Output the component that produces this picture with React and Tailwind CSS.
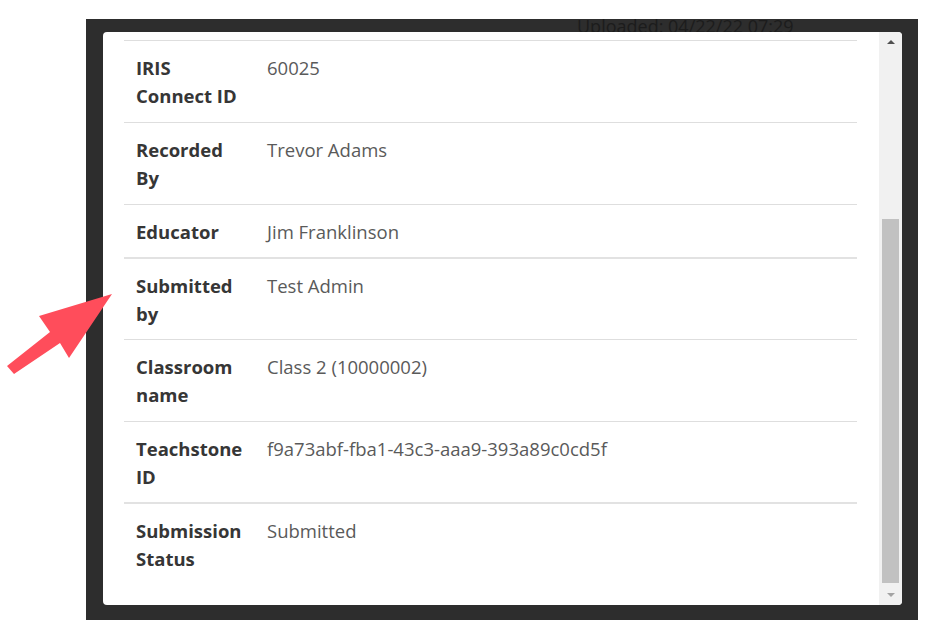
import React from "react";

const rows = [
  { label: ["IRIS", "Connect ID"], value: "60025" },
  { label: ["Recorded", "By"], value: "Trevor Adams" },
  { label: ["Educator"], value: "Jim Franklinson", tight: true },
  { label: ["Submitted", "by"], value: "Test Admin", thick: true, tight: true },
  { label: ["Classroom", "name"], value: "Class 2 (10000002)" },
  { label: ["Teachstone", "ID"], value: "f9a73abf-fba1-43c3-aaa9-393a89c0cd5f", tight: true },
  { label: ["Submission", "Status"], value: "Submitted", thick: true, tight: true },
];

const DetailRow = ({ row }) => (
  <div
    className={
      "flex pt-[13px] " +
      (row.tight ? "pb-[11px] " : "pb-[12px] ") +
      (row.thick ? "border-t-2 border-[#e2e2e2]" : "border-t border-[#dedede]")
    }
  >
    <div className="w-[131px] shrink-0 pl-3 font-bold text-[#363636]">
      {row.label.map((line) => (
        <div key={line} className="whitespace-nowrap">
          {line}
        </div>
      ))}
    </div>
    <div className="pl-3 text-[#5a5a5a] whitespace-nowrap">{row.value}</div>
  </div>
);

const Scrollbar = () => (
  <div className="w-[23px] shrink-0 bg-[#f1f1f1] flex flex-col">
    <div className="h-[20px] flex items-center justify-center">
      <div className="w-0 h-0 border-l-[4px] border-r-[4px] border-b-[4px] border-l-transparent border-r-transparent border-b-[#505050]" />
    </div>
    <div className="flex-1 px-[3px] pt-[167px]">
      <div className="h-[364px] bg-[#c1c1c1]" />
    </div>
    <div className="h-[20px] flex items-center justify-center">
      <div className="w-0 h-0 border-l-[4px] border-r-[4px] border-t-[4px] border-l-transparent border-r-transparent border-t-[#a3a3a3]" />
    </div>
  </div>
);

export default function App() {
  return (
    <div
      className="relative w-[940px] h-[640px] bg-white overflow-hidden"
      style={{ fontFamily: '"Open Sans", "Noto Sans", sans-serif' }}
    >
      <div className="relative ml-[86px] mt-[19px] w-[832px] h-[601px] bg-[#2d2d2d] overflow-hidden pl-[17px] pt-[13px]">
        <div className="absolute left-[491px] top-[-6px] text-[18px] text-[#1c1c1c] whitespace-nowrap">
          Uploaded: 04/22/22 07:29
        </div>
        <div className="relative flex w-[799px] h-[573px] bg-white rounded-[4px] overflow-hidden">
          <div className="flex-1 pl-[21px] pr-[22px] pt-[8px] text-[18.5px] leading-[28px]">
            {rows.map((row) => (
              <DetailRow key={row.value} row={row} />
            ))}
          </div>
          <Scrollbar />
        </div>
      </div>
      <svg
        className="absolute left-0 top-0"
        width="940"
        height="640"
        viewBox="0 0 940 640"
      >
        <polygon
          points="112,294 39,316 50,332 7,366 14,374 60,343 69,358"
          fill="#ff4d5b"
        />
      </svg>
    </div>
  );
}
